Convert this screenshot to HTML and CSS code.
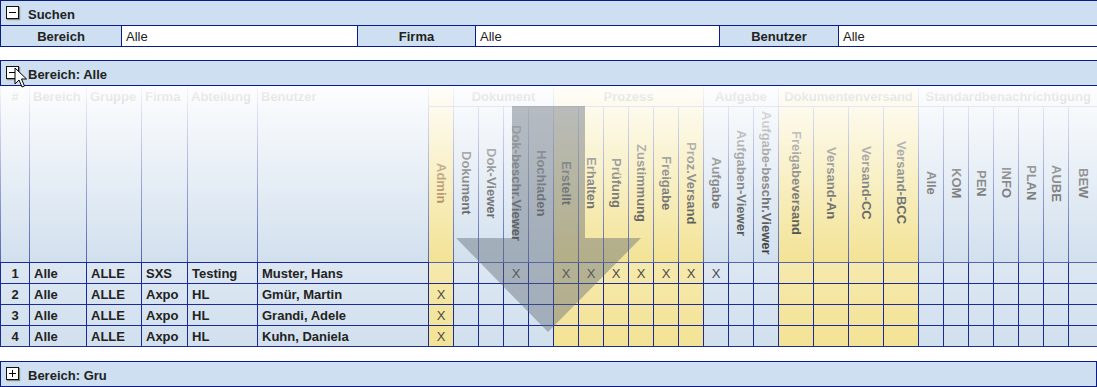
FILE: index.html
```html
<!DOCTYPE html>
<html lang="de">

<head>
    <meta charset="UTF-8" />
    <title>Berechtigungen</title>
    <link rel="stylesheet" href="styles.css">
</head>

<body>

    <!-- Suchen -->
    <table class="panel search">
        <colgroup>
            <col style="width:121px"><col style="width:236px"><col style="width:118px">
            <col style="width:244px"><col style="width:119px"><col style="width:259px">
        </colgroup>
        <tr>
            <td colspan="6" class="bar">
                <div class="bar-inner"><span class="tg"></span><span class="bar-title">Suchen</span></div>
            </td>
        </tr>
        <tr class="search-row">
            <th>Bereich</th><td>Alle</td>
            <th>Firma</th><td>Alle</td>
            <th>Benutzer</th><td>Alle</td>
        </tr>
    </table>
    <!--// Suchen -->

    <!-- Bereich: Alle -->
    <div class="grid-wrap">
        <table class="panel rights">
            <colgroup>
                <col style="width:29px"><col style="width:57px"><col style="width:55px">
                <col style="width:46px"><col style="width:70px"><col style="width:171px">
                <col class="y" style="width:25px">
                <col style="width:25px"><col style="width:25px"><col style="width:25px"><col style="width:25px">
                <col class="y" style="width:25px"><col class="y" style="width:25px"><col class="y" style="width:25px">
                <col class="y" style="width:25px"><col class="y" style="width:25px"><col class="y" style="width:25px">
                <col style="width:25px"><col style="width:25px"><col style="width:25px">
                <col class="y" style="width:35px"><col class="y" style="width:35px">
                <col class="y" style="width:35px"><col class="y" style="width:35px">
                <col style="width:25px"><col style="width:25px"><col style="width:25px"><col style="width:25px">
                <col style="width:25px"><col style="width:25px"><col style="width:29px">
            </colgroup>
            <thead>
                <tr>
                    <td colspan="31" class="bar">
                        <div class="bar-inner"><span class="tg"></span><span class="bar-title">Bereich: Alle</span></div>
                    </td>
                </tr>
                <tr class="groups">
                    <th rowspan="2" class="fixed num">#</th>
                    <th rowspan="2" class="fixed">Bereich</th>
                    <th rowspan="2" class="fixed">Gruppe</th>
                    <th rowspan="2" class="fixed">Firma</th>
                    <th rowspan="2" class="fixed">Abteilung</th>
                    <th rowspan="2" class="fixed">Benutzer</th>
                    <th></th>
                    <th colspan="4">Dokument</th>
                    <th colspan="6">Prozess</th>
                    <th colspan="3">Aufgabe</th>
                    <th colspan="4">Dokumentenversand</th>
                    <th colspan="7">Standardbenachrichtigung</th>
                </tr>
                <tr class="rot">
                    <th class="admin"><span>Admin</span></th>
                    <th><span>Dokument</span></th>
                    <th><span>Dok-Viewer</span></th>
                    <th><span>Dok-beschr.Viewer</span></th>
                    <th><span>Hochladen</span></th>
                    <th><span>Erstellt</span></th>
                    <th><span>Erhalten</span></th>
                    <th><span>Prüfung</span></th>
                    <th><span>Zustimmung</span></th>
                    <th><span>Freigabe</span></th>
                    <th><span>Proz.Versand</span></th>
                    <th><span>Aufgabe</span></th>
                    <th><span>Aufgaben-Viewer</span></th>
                    <th><span>Aufgabe-beschr.Viewer</span></th>
                    <th><span>Freigabeversand</span></th>
                    <th><span>Versand-An</span></th>
                    <th><span>Versand-CC</span></th>
                    <th><span>Versand-BCC</span></th>
                    <th><span>Alle</span></th>
                    <th><span>KOM</span></th>
                    <th><span>PEN</span></th>
                    <th><span>INFO</span></th>
                    <th><span>PLAN</span></th>
                    <th><span>AUBE</span></th>
                    <th><span>BEW</span></th>
                </tr>
            </thead>
            <tbody>
                <tr>
                    <td>1</td><td>Alle</td><td>ALLE</td><td>SXS</td><td>Testing</td><td>Muster, Hans</td>
                    <td></td>
                    <td></td><td></td><td>X</td><td></td>
                    <td>X</td><td>X</td><td>X</td><td>X</td><td>X</td><td>X</td>
                    <td>X</td><td></td><td></td>
                    <td></td><td></td><td></td><td></td>
                    <td></td><td></td><td></td><td></td><td></td><td></td><td></td>
                </tr>
                <tr>
                    <td>2</td><td>Alle</td><td>ALLE</td><td>Axpo</td><td>HL</td><td>Gmür, Martin</td>
                    <td>X</td>
                    <td></td><td></td><td></td><td></td>
                    <td></td><td></td><td></td><td></td><td></td><td></td>
                    <td></td><td></td><td></td>
                    <td></td><td></td><td></td><td></td>
                    <td></td><td></td><td></td><td></td><td></td><td></td><td></td>
                </tr>
                <tr>
                    <td>3</td><td>Alle</td><td>ALLE</td><td>Axpo</td><td>HL</td><td>Grandi, Adele</td>
                    <td>X</td>
                    <td></td><td></td><td></td><td></td>
                    <td></td><td></td><td></td><td></td><td></td><td></td>
                    <td></td><td></td><td></td>
                    <td></td><td></td><td></td><td></td>
                    <td></td><td></td><td></td><td></td><td></td><td></td><td></td>
                </tr>
                <tr>
                    <td>4</td><td>Alle</td><td>ALLE</td><td>Axpo</td><td>HL</td><td>Kuhn, Daniela</td>
                    <td>X</td>
                    <td></td><td></td><td></td><td></td>
                    <td></td><td></td><td></td><td></td><td></td><td></td>
                    <td></td><td></td><td></td>
                    <td></td><td></td><td></td><td></td>
                    <td></td><td></td><td></td><td></td><td></td><td></td><td></td>
                </tr>
            </tbody>
        </table>

        <!-- Kopf ausblenden -->
        <div class="head-fade"></div>

        <!-- Drag-Pfeil -->
        <svg class="drag-arrow" width="1097" height="287" viewBox="0 0 1097 287">
            <polygon points="512,46 585,46 585,178 641,178 548,272 456,178 512,178" fill="rgba(98,106,118,0.44)" />
        </svg>

        <svg class="cursor" width="14" height="22" viewBox="0 0 14 22">
            <path d="M1 1 L1 17 L5 13 L8 20 L10.5 19 L7.5 12 L12.5 12 Z" fill="#fff" stroke="#000" stroke-width="1" stroke-linejoin="miter" />
        </svg>
    </div>
    <!--// Bereich: Alle -->

    <table class="panel closed">
        <tr>
            <td class="bar">
                <div class="bar-inner"><span class="tg plus"></span><span class="bar-title">Bereich: Gru</span></div>
            </td>
        </tr>
    </table>

</body>

</html>
```

FILE: styles.css
```css
body {
    margin: 0;
    font-family: "Liberation Sans", Arial, sans-serif;
    font-size: 13px;
    color: #222;
    background: #fff;
}

.panel {
    width: 1097px;
    border-collapse: collapse;
    table-layout: fixed;
}

.panel td,
.panel th {
    padding: 0;
    border: 1px solid #0b1c86;
}

/* Titelzeile mit Auf-/Zuklapp-Symbol */
.bar {
    height: 24px;
    background: #cddff0;
}

.bar-inner {
    display: flex;
    align-items: center;
    gap: 9px;
    padding-left: 5px;
    font-weight: bold;
}

.bar-title {
    padding-top: 3px;
}

.tg {
    position: relative;
    display: inline-block;
    width: 11px;
    height: 11px;
    margin-top: -2px;
    border: 1px solid #111;
    background: #fff;
    box-shadow: 1px 1px 1px #8a8a8a;
}

.tg::before {
    content: "";
    position: absolute;
    left: 2px;
    right: 2px;
    top: 5px;
    height: 1px;
    background: #000;
}

.tg.plus::after {
    content: "";
    position: absolute;
    top: 2px;
    bottom: 2px;
    left: 5px;
    width: 1px;
    background: #000;
}

/* Suchen */
.search {
    margin-bottom: 13px;
}

.search-row {
    height: 21px;
}

.search-row th {
    background: #cddff0;
    font-weight: bold;
    text-align: center;
}

.search-row td {
    background: #fff;
    padding-left: 4px;
}

/* Rechte-Tabelle */
.grid-wrap {
    position: relative;
    width: 1097px;
    margin-bottom: 14px;
}

.rights col {
    background: #d2e0ee;
}

.rights col.y {
    background: #f3e395;
}

.rights thead th {
    border-color: #5565b5;
    color: #333;
    font-weight: bold;
}

.groups {
    height: 21px;
}

.groups th {
    text-align: center;
    vertical-align: middle;
}

.groups th.fixed {
    text-align: left;
    vertical-align: top;
    padding: 3px 0 0 3px;
    border-bottom-color: #1a2a96;
}

.groups th.num {
    text-align: center;
    padding-left: 0;
}

.rot {
    height: 156px;
}

.rot th {
    text-align: center;
    vertical-align: middle;
    border-bottom-color: #1a2a96;
}

.rot th span {
    writing-mode: vertical-rl;
    display: inline-block;
    line-height: 15px;
}

.rot th.admin {
    color: #8f5d1c;
}

.rights tbody {
    background: linear-gradient(rgba(255, 255, 255, 0.22), rgba(255, 255, 255, 0));
}

.rights tbody tr {
    height: 21px;
}

.rights tbody td {
    border-color: #1a2a96;
    font-weight: bold;
    padding-left: 4px;
    white-space: nowrap;
}

.rights tbody td:first-child {
    text-align: center;
    padding-left: 0;
}

.rights tbody td:nth-child(n+7) {
    text-align: center;
    padding-left: 0;
    font-weight: normal;
    color: #4a4a4a;
}

.head-fade {
    position: absolute;
    left: 0;
    top: 26px;
    width: 1097px;
    height: 176px;
    background: linear-gradient(rgba(255, 255, 255, 0.95), rgba(255, 255, 255, 0));
    pointer-events: none;
}

.drag-arrow {
    position: absolute;
    left: 0;
    top: 0;
    pointer-events: none;
}

.cursor {
    position: absolute;
    left: 14px;
    top: 7px;
    pointer-events: none;
}
```
